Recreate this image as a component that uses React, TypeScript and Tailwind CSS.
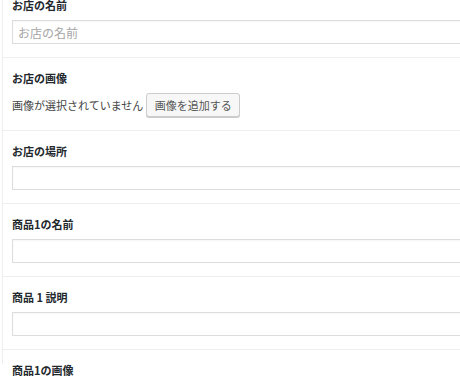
import React from "react";

const font = { fontFamily: '"Noto Sans CJK JP", "Noto Sans", sans-serif' };

interface FieldProps {
  label: string;
  placeholder?: string;
}

function TextField({ label, placeholder }: FieldProps) {
  return (
    <div className="border-t border-[#eeeeee] pt-[10px] pb-[13px] pl-[9px]">
      <div className="h-[20px] leading-[20px] text-[11px] font-bold text-[#23282d] mb-[5px]">{label}</div>
      <input
        type="text"
        placeholder={placeholder}
        className="block w-[500px] h-[24px] border border-[#dddddd] bg-white px-[5px] text-[12px] text-[#333] placeholder:text-[#a5a5a5] shadow-[inset_0_1px_2px_rgba(0,0,0,0.04)] outline-none"
        style={font}
      />
    </div>
  );
}

function ImageField({ label }: FieldProps) {
  return (
    <div className="border-t border-[#eeeeee] pt-[10px] pb-[13px] pl-[9px]">
      <div className="h-[20px] leading-[20px] text-[11px] font-bold text-[#23282d] mb-[5px]">{label}</div>
      <div className="flex items-center gap-[3px] h-[24px]">
        <span className="text-[11px] text-[#444]">画像が選択されていません</span>
        <button
          className="h-[24px] w-[94px] border border-[#cccccc] bg-[#f7f7f7] rounded-[3px] text-[11px] text-[#555] shadow-[0_1px_0_#cccccc] cursor-pointer"
          style={font}
        >
          画像を追加する
        </button>
      </div>
    </div>
  );
}

export default function App() {
  return (
    <div className="w-[460px] h-[380px] overflow-hidden bg-white" style={font}>
      <div className="ml-[2px] h-full border-l border-[#eeeeee]">
        <div className="-mt-[16px]">
          <TextField label="お店の名前" placeholder="お店の名前" />
          <ImageField label="お店の画像" />
          <TextField label="お店の場所" />
          <TextField label="商品1の名前" />
          <TextField label="商品 1 説明" />
          <ImageField label="商品1の画像" />
        </div>
      </div>
    </div>
  );
}
